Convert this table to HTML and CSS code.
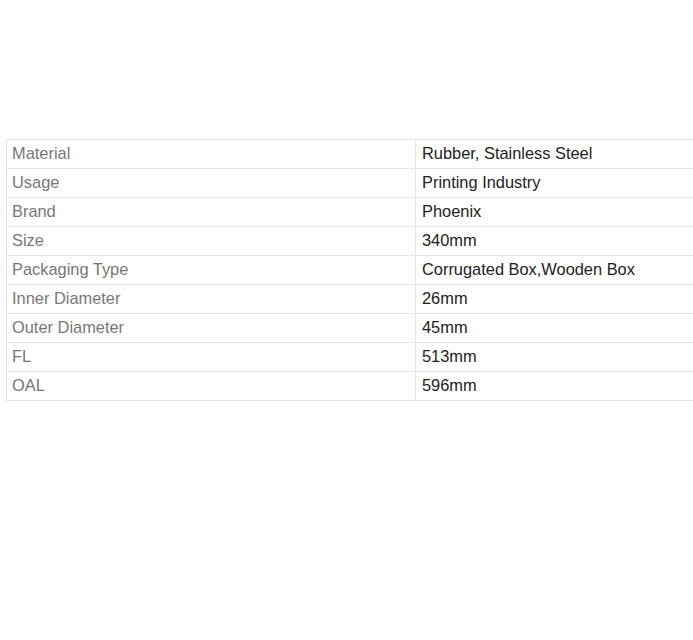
FILE: index.html
```html
<!DOCTYPE html>
<html>
<head>
<meta charset="utf-8">
<link rel="stylesheet" href="styles.css">
</head>
<body>
<div class="wrap">
<table class="spec">
<tr><td class="k">Material</td><td class="v">Rubber, Stainless Steel</td></tr>
<tr><td class="k">Usage</td><td class="v">Printing Industry</td></tr>
<tr><td class="k">Brand</td><td class="v">Phoenix</td></tr>
<tr><td class="k">Size</td><td class="v">340mm</td></tr>
<tr><td class="k">Packaging Type</td><td class="v">Corrugated Box,Wooden Box</td></tr>
<tr><td class="k">Inner Diameter</td><td class="v">26mm</td></tr>
<tr><td class="k">Outer Diameter</td><td class="v">45mm</td></tr>
<tr><td class="k">FL</td><td class="v">513mm</td></tr>
<tr><td class="k">OAL</td><td class="v">596mm</td></tr>
</table>
</div>
</body>
</html>
```
FILE: styles.css
```css
html, body { margin: 0; padding: 0; background: #fff; overflow: hidden; }
.wrap { padding: 139px 0 0 6px; width: 700px; }
.spec {
  border-collapse: collapse;
  width: 700px;
  table-layout: fixed;
  font-family: "Liberation Sans", Arial, sans-serif;
  font-size: 16.4px;
}
.spec td {
  border: 1px solid #e6e6e6;
  height: 28px;
  padding: 0 6px 2px 5px;
  box-sizing: border-box;
  line-height: 26px;
  vertical-align: middle;
}
.spec tr { height: 29px; }
.spec .k { width: 409px; color: #777; }
.spec .v { color: #222; padding-left: 6px; }
```
